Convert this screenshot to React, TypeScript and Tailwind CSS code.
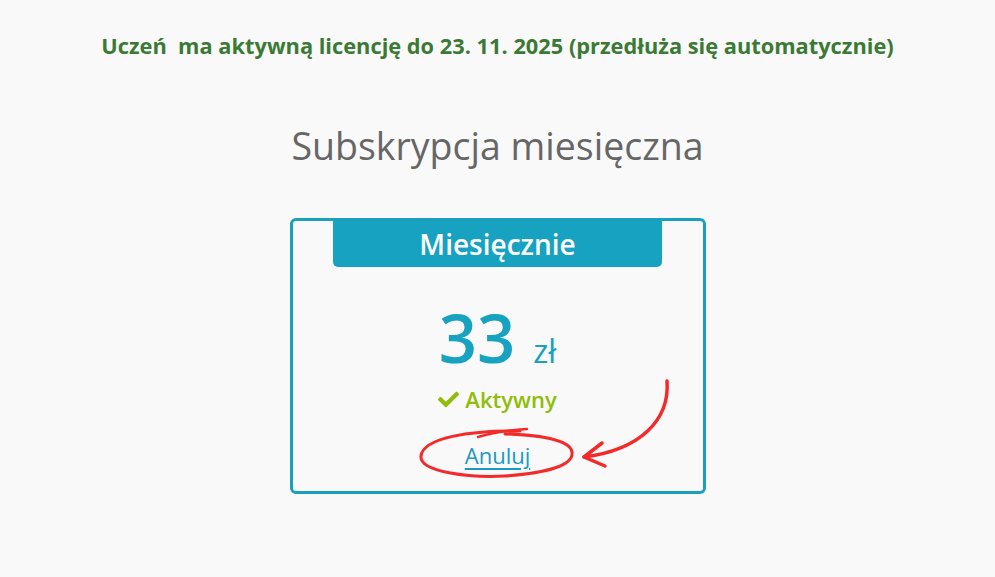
import { FaCheck } from "react-icons/fa";

export default function App() {
  return (
    <div
      className="relative min-h-screen w-full bg-[#f9f9f9] pt-[31px]"
      style={{ fontFamily: '"Open Sans", "Noto Sans", sans-serif' }}
    >
      <p className="text-center text-[21.8px] font-bold leading-[30px] text-[#3b7a35]">
        Uczeń&nbsp; ma aktywną licencję do 23. 11. 2025 (przedłuża się automatycznie)
      </p>
      <h1 className="mt-[60px] text-center text-[37.5px] font-normal leading-[50px] text-[#666666]">
        Subskrypcja miesięczna
      </h1>
      <div className="mt-[47px] flex justify-center">
        <div className="relative flex h-[276px] w-[416px] flex-col items-center rounded-[6px] border-[3px] border-[#1aa0bd]">
          <div className="flex h-[46px] w-[329px] items-center justify-center rounded-b-[5px] bg-[#16a2c0]">
            <span className="text-[28px] font-semibold leading-none text-white">Miesięcznie</span>
          </div>
          <div className="mt-[30px] flex items-baseline gap-[18px] text-[#17a2c0]">
            <span className="text-[67px] font-semibold leading-[80px]">33</span>
            <span className="text-[32px] font-normal leading-none">zł</span>
          </div>
          <div className="mt-[7px] flex items-center gap-[6px] text-[#8fbd0a]">
            <FaCheck size={21} />
            <span className="text-[22px] font-semibold leading-[30px]">Aktywny</span>
          </div>
          <a
            href="#"
            className="mt-[27px] text-[22px] leading-[28px] text-[#1b9ac2] underline decoration-[1.5px] underline-offset-[4px]"
          >
            Anuluj
          </a>
        </div>
      </div>
      {/* red hand-drawn annotation */}
      <svg
        className="pointer-events-none absolute left-0 top-0"
        width="995"
        height="577"
        fill="none"
        stroke="#f42a2a"
        strokeLinecap="round"
        strokeLinejoin="round"
      >
        <path
          d="M520 431 C 470 430, 423 438, 421 456 C 419 472, 470 478, 505 476 C 548 473, 574 465, 572 452 C 570 440, 540 435, 505 434"
          strokeWidth="3"
        />
        <path d="M478 437 C 495 432, 512 430, 527 429" strokeWidth="2.5" />
        <path d="M667 381 C 670 420, 640 450, 584 457" strokeWidth="3.5" />
        <path d="M602 443 L 584 457 L 605 466" strokeWidth="3.5" />
      </svg>
    </div>
  );
}
